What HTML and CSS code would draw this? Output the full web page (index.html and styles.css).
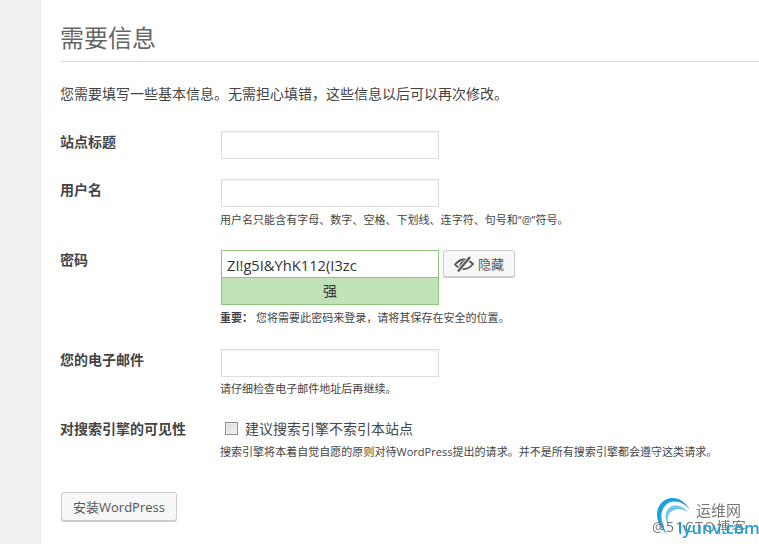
FILE: index.html
```html
<!DOCTYPE html>
<html lang="zh-CN">
<head>
<meta charset="utf-8">
<title>需要信息</title>
<link rel="stylesheet" href="styles.css">
</head>
<body>
<main class="card">
  <h1 class="title">需要信息</h1>
  <p class="intro">您需要填写一些基本信息。无需担心填错，这些信息以后可以再次修改。</p>
  <div class="row row-site">
    <div class="label">站点标题</div>
    <div class="field"><div class="input"></div></div>
  </div>
  <div class="row row-user">
    <div class="label">用户名</div>
    <div class="field">
      <div class="input"></div>
      <p class="hint">用户名只能含有字母、数字、空格、下划线、连字符、句号和“@”符号。</p>
    </div>
  </div>
  <div class="row row-pass">
    <div class="label label-pass">密码</div>
    <div class="field">
      <div class="pass-line">
        <div class="pass-box">
          <div class="pass-value">ZI!g5I&amp;YhK112(I3zc</div>
          <div class="pass-strength">强</div>
        </div>
        <div class="button hide-btn">
          <svg class="eye" width="20" height="16" viewBox="0 0 20 16" aria-hidden="true">
            <path d="M1 8.500C4 5 7 3.500 10 3.500S16 5 19 8C16 11.500 13 13 10 13S4 12 1 8.500Z" fill="none" stroke="#555" stroke-width="1.800"/>
            <path d="M5.500 11C5 8 7 5 10 4.800C11.500 4.700 12.500 5 13 5.500L7.500 12Z" fill="#555"/>
            <path d="M4 15.500L16 1" stroke="#f7f7f7" stroke-width="4"/>
            <path d="M4 15.500L16 1" stroke="#555" stroke-width="2.200"/>
          </svg>
          <span>隐藏</span>
        </div>
      </div>
      <p class="hint hint-pass"><strong class="semi">重要：</strong> 您将需要此密码来登录，请将其保存在安全的位置。</p>
    </div>
  </div>
  <div class="row row-mail">
    <div class="label">您的电子邮件</div>
    <div class="field">
      <div class="input"></div>
      <p class="hint hint-mail">请仔细检查电子邮件地址后再继续。</p>
    </div>
  </div>
  <div class="row row-vis">
    <div class="label">对搜索引擎的可见性</div>
    <div class="field">
      <div class="check-line"><span class="checkbox"></span><span>建议搜索引擎不索引本站点</span></div>
      <p class="hint hint-vis">搜索引擎将本着自觉自愿的原则对待WordPress提出的请求。并不是所有搜索引擎都会遵守这类请求。</p>
    </div>
  </div>
  <div class="button install">安装WordPress</div>
</main>
<div class="watermark">
  <svg class="wm-logo" width="44" height="46" viewBox="0 0 44 46" aria-hidden="true">
    <path d="M36 16C31 6 20 1 11 6C1 12 -1 28 13 40C6 28 5 16 13 10C20 5 30 8 36 16Z" fill="#1aa3e0"/>
    <path d="M34 18C28 11 20 9 15 14C10 19 11 27 15 33C13 26 13 20 18 17C23 14 29 15 34 18Z" fill="#6cc9f0"/>
  </svg>
  <span class="wm-cn">运维网</span>
  <span class="wm-blog">@51CTO博客</span>
  <span class="wm-site">lyunv.com</span>
</div>
</body>
</html>
```

FILE: styles.css
```css
* { box-sizing: border-box; }
html, body { margin: 0; height: 544px; overflow: hidden; }
body {
  background: #f1f1f1;
  color: #444;
  font-family: "Open Sans", "Noto Sans CJK SC", sans-serif;
  font-size: 13px;
  position: relative;
}
.card {
  margin-left: 41px;
  height: 544px;
  background: #fff;
  padding: 0 0 0 20px;
  box-shadow: 0 0 2px rgba(0,0,0,.08);
}
.title {
  margin: 0;
  height: 62px;
  padding-top: 21px;
  border-bottom: 1px solid #dedede;
  font-size: 24px;
  line-height: 33px;
  font-weight: 400;
  color: #666;
  text-indent: -1px;
}
.intro { margin: 22px 0 0; font-size: 14px; line-height: 20px; color: #444; text-indent: -1px; }
.row { display: grid; grid-template-columns: 160px 1fr; }
.row-site { margin-top: 27px; }
.row-user { margin-top: 20px; }
.row-pass { margin-top: 22px; }
.row-mail { margin-top: 23px; }
.row-vis { margin-top: 21px; }
.label { font-size: 14px; font-weight: 700; line-height: 20px; padding-top: 1px; color: #444; text-indent: -1px; }
.label-pass { padding-top: 0; }
.input {
  width: 218px;
  height: 28px;
  border: 1px solid #ddd;
  box-shadow: inset 0 1px 2px rgba(0,0,0,.07);
  background: #fff;
}
.hint { margin: 5px 0 0; font-size: 11px; line-height: 16px; color: #444; text-indent: -1px; letter-spacing: .03px; }
.hint-pass { margin-top: 5px; }
.hint-mail { margin-top: 4px; }
.hint-vis { margin-top: 6px; }
.semi { font-weight: 700; }
.pass-line { display: flex; gap: 4px; align-items: flex-start; }
.pass-box { width: 218px; border: 1px solid #8dc67c; }
.pass-value {
  height: 27px;
  background: #fff;
  padding-left: 5px;
  font-size: 14.700px;
  line-height: 28px;
  color: #333;
  border-bottom: 1px solid #8dc67c;
}
.pass-strength {
  height: 26px;
  background: #c1e1b9;
  text-align: center;
  font-size: 14px;
  line-height: 26px;
  color: #333;
}
.button {
  display: flex;
  align-items: center;
  justify-content: center;
  background: #f7f7f7;
  border: 1px solid #ccc;
  border-radius: 3px;
  box-shadow: 0 1px 0 #ccc;
  color: #555;
  font-size: 13px;
}
.hide-btn { width: 72px; height: 27px; gap: 4px; }
.eye { flex: none; }
.check-line { display: flex; align-items: center; gap: 7px; height: 20px; padding-left: 4px; font-size: 14px; color: #444; }
.checkbox {
  width: 13px;
  height: 13px;
  border: 1px solid #8e8e8e;
  background: linear-gradient(135deg, #d8d8d8, #f3f3f3);
  box-shadow: inset 0 0 0 1px #eee;
}
.install { width: 116px; height: 29px; margin-top: 32px; }
.watermark { position: absolute; left: 640px; top: 490px; width: 119px; height: 54px; filter: blur(.4px); }
.wm-logo { position: absolute; left: 14px; top: 4px; }
.wm-cn { position: absolute; left: 56px; top: 10px; font-size: 15px; line-height: 20px; color: #777; }
.wm-blog { position: absolute; left: 12px; top: 27px; font-size: 14px; line-height: 20px; color: #777; white-space: nowrap; letter-spacing: 1.400px; }
.wm-site { position: absolute; left: 38px; top: 27px; font-size: 16.500px; font-weight: 600; line-height: 22px; color: #1c9fdc; white-space: nowrap; }
```
